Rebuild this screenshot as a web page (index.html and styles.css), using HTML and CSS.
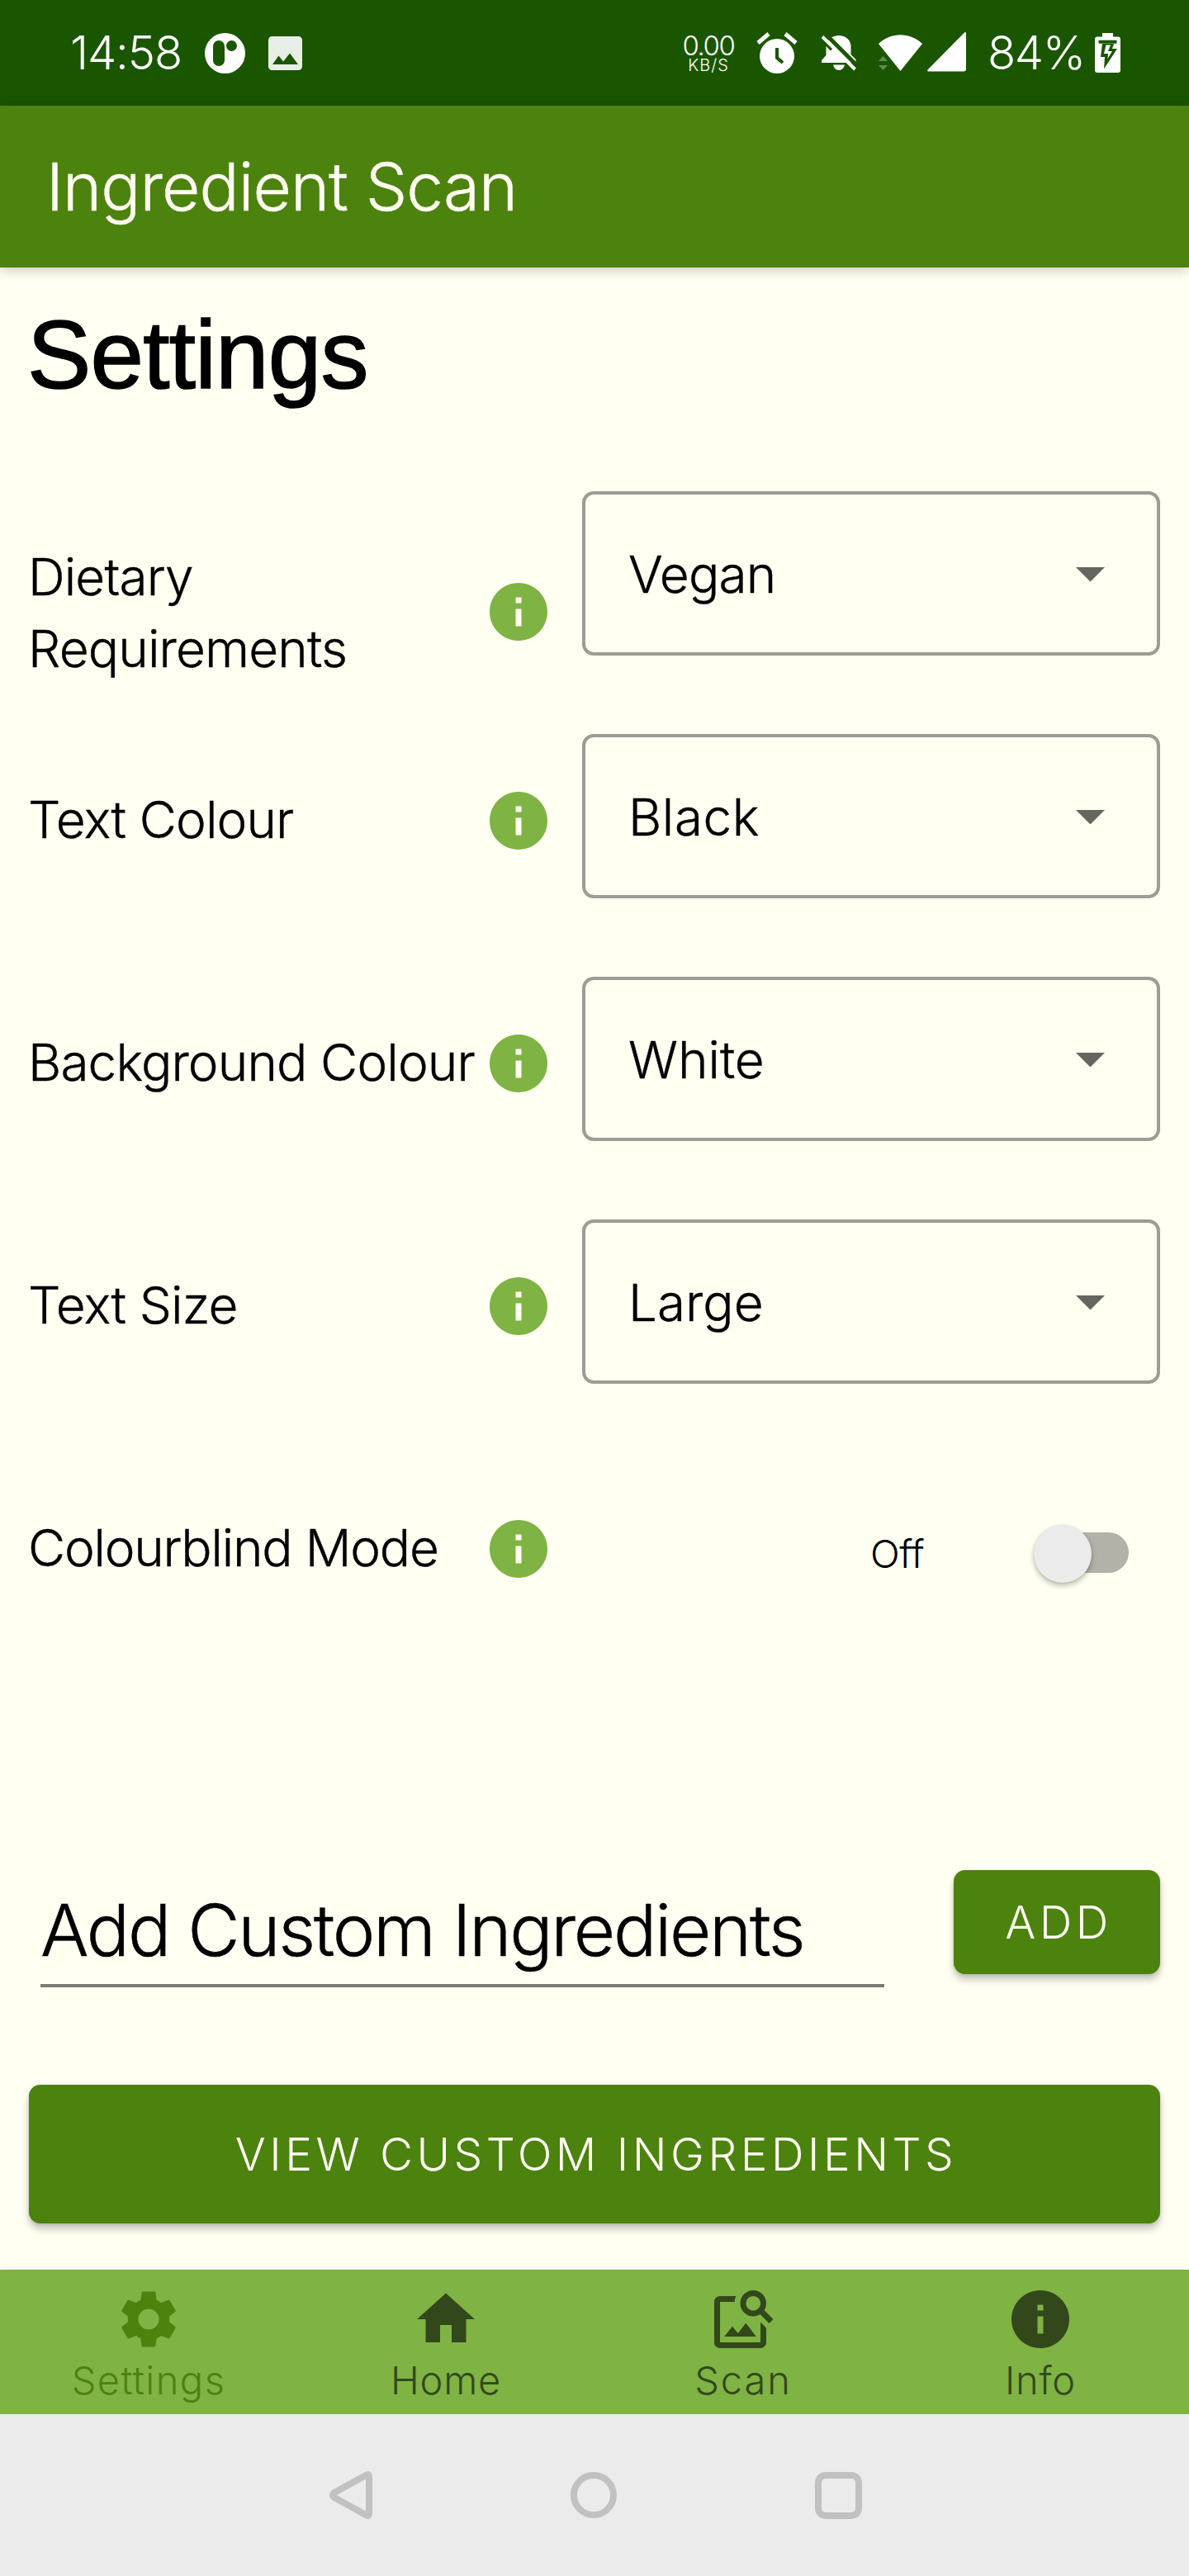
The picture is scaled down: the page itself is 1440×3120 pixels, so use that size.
FILE: index.html
```html
<!DOCTYPE html>
<html lang="en">
<head>
<meta charset="utf-8">
<title>Ingredient Scan</title>
<link rel="stylesheet" href="styles.css">
</head>
<body>
<svg class="defs" width="0" height="0" aria-hidden="true">
  <symbol id="info" viewBox="0 0 24 24"><path d="M12 2C6.48 2 2 6.48 2 12s4.48 10 10 10 10-4.48 10-10S17.52 2 12 2zm1 15h-2v-6h2v6zm0-8h-2V7h2v2z"/></symbol>
  <symbol id="caret" viewBox="0 0 10 5"><path d="M0 0l5 5 5-5z"/></symbol>
</svg>

<header class="status">
  <span class="status-time">14:58</span>
  <svg class="status-app" width="49" height="49" viewBox="0 0 49 49"><circle cx="24.5" cy="24.5" r="24.5" fill="#fff"/><rect x="10" y="9" width="14" height="31" rx="7" fill="#1a5600"/><circle cx="32.5" cy="15.5" r="6.5" fill="#1a5600"/></svg>
  <svg class="status-photo" width="41" height="41" viewBox="0 0 41 41"><path fill="#e8eee6" fill-rule="evenodd" d="M4.500 0h32a4.500 4.500 0 0 1 4.500 4.500v32a4.500 4.500 0 0 1-4.500 4.500h-32a4.500 4.500 0 0 1-4.500-4.500v-32a4.500 4.500 0 0 1 4.500-4.500zM5 34h31L26 20.500l-8 10-5.500-7z"/></svg>
  <div class="status-right">
    <div class="net"><span class="net-rate">0.00</span><span class="net-unit">KB/S</span></div>
    <svg class="alarm" width="50" height="50" viewBox="0 0 50 50"><circle cx="25" cy="29" r="21" fill="#fff"/><path d="M2 13L15 2M48 13L35 2" stroke="#fff" stroke-width="5"/><path d="M25 19v12l7 6" fill="none" stroke="#1a5600" stroke-width="4"/></svg>
    <svg class="bell" width="42" height="43" viewBox="0 0 42 43"><path fill="#fff" d="M21 0c8 0 14 5 14.500 12v11l6 6v4H0v-3l5.500-6V13C6 5 13 0 21 0zM14 35.500h14c-1 4-3.500 6.500-7 6.500s-6-2.500-7-6.500z"/><path d="M4.500-2L45 38.500" stroke="#1a5600" stroke-width="5"/><path d="M-1-1.500v8l12 12 3-3z" fill="#1a5600"/><path d="M1 1.500L40.500 41" stroke="#fff" stroke-width="4"/></svg>
    <svg class="wifi" width="53" height="44" viewBox="0 0 53 44"><path fill="#fff" d="M0 11C15-3.500 38-3.500 53 11L26.500 44z"/><path fill="#5f8b4d" d="M5.500 26L11 32H0zM0 37h11l-5.500 6z"/></svg>
    <svg class="signal" width="47" height="48" viewBox="0 0 47 48"><path fill="#fff" d="M44 1.500Q47-1.500 47 2V44.500Q47 47.500 44 47.500H1.500Q-1 47.500 1 45z"/></svg>
    <span class="percent">84%</span>
    <svg width="31" height="48" viewBox="0 0 31 48"><path fill="#fff" d="M9 0h13v4.500h6a3 3 0 0 1 3 3V45a3 3 0 0 1-3 3H3a3 3 0 0 1-3-3V7.500a3 3 0 0 1 3-3h6z"/><path d="M4.500 10.700h22" stroke="#1a5600" stroke-width="4"/><path fill="#1a5600" d="M9 13h14l-2 6h6L11 43.500l1-14.500H7z"/><path fill="#fff" d="M13.500 14.500h5.500l-3 7.500h5l-5.500 9 .5-6h-5z"/></svg>
  </div>
</header>

<div class="appbar">Ingredient Scan</div>

<main class="content">
  <h1 class="title">Settings</h1>

  <section class="row">
    <div class="label-group"><span class="label">Dietary Requirements</span><svg class="info raised"><use href="#info"/></svg></div>
    <div class="select"><span class="tight">Vegan</span><svg class="caret"><use href="#caret"/></svg></div>
  </section>
  <section class="row">
    <div class="label-group"><span class="label">Text Colour</span><svg class="info"><use href="#info"/></svg></div>
    <div class="select"><span class="loose">Black</span><svg class="caret"><use href="#caret"/></svg></div>
  </section>
  <section class="row">
    <div class="label-group"><span class="label">Background Colour</span><svg class="info"><use href="#info"/></svg></div>
    <div class="select"><span>White</span><svg class="caret"><use href="#caret"/></svg></div>
  </section>
  <section class="row">
    <div class="label-group"><span class="label">Text Size</span><svg class="info"><use href="#info"/></svg></div>
    <div class="select"><span>Large</span><svg class="caret"><use href="#caret"/></svg></div>
  </section>
  <section class="row">
    <div class="label-group"><span class="label mode">Colourblind Mode</span><svg class="info"><use href="#info"/></svg></div>
    <div class="toggle"><span class="toggle-text">Off</span><div class="switch"><div class="track"></div><div class="thumb"></div></div></div>
  </section>

  <section class="add-row">
    <div class="field">Add Custom Ingredients</div>
    <div class="button add">ADD</div>
  </section>
  <div class="button view">VIEW CUSTOM INGREDIENTS</div>
</main>

<nav class="tabs">
  <div class="tab active"><svg class="tab-icon" viewBox="0 0 24 24"><path d="M19.140 12.940c.04-.3.060-.61.060-.94 0-.32-.02-.64-.07-.94l2.030-1.580c.18-.14.230-.41.120-.61l-1.920-3.320c-.12-.22-.37-.29-.59-.22l-2.390.960c-.5-.38-1.030-.7-1.620-.94l-.36-2.540c-.04-.24-.24-.41-.48-.41h-3.840c-.24 0-.43.170-.47.410l-.36 2.540c-.59.240-1.130.570-1.620.940l-2.390-.96c-.22-.08-.47 0-.59.220L2.740 8.870c-.12.210-.08.470.120.610l2.030 1.580c-.05.300-.09.630-.09.940s.020.640.070.940l-2.030 1.580c-.18.140-.23.410-.12.610l1.920 3.320c.12.220.370.290.590.220l2.390-.96c.5.380 1.030.700 1.620.940l.36 2.540c.05.240.240.410.480.410h3.840c.24 0 .440-.17.470-.41l.36-2.540c.59-.24 1.130-.56 1.620-.94l2.390.960c.22.080.470 0 .590-.22l1.920-3.320c.12-.22.070-.47-.12-.61l-2.010-1.580zM12 15.600c-1.980 0-3.600-1.620-3.600-3.600s1.620-3.600 3.600-3.600 3.600 1.620 3.600 3.600-1.620 3.600-3.600 3.600z"/></svg><span class="settings">Settings</span></div>
  <div class="tab"><svg class="tab-icon" viewBox="0 0 24 24"><path d="M10 20v-6h4v6h5v-8h3L12 3 2 12h3v8z"/></svg><span>Home</span></div>
  <div class="tab"><svg class="tab-icon" viewBox="0 0 24 24"><path d="M18 13v7H4V6h5.020c.05-.71.220-1.380.480-2H4c-1.100 0-2 .9-2 2v14c0 1.100.900 2 2 2h14c1.100 0 2-.9 2-2v-5l-2-2zm-1.500 5h-11l2.750-3.530 1.960 2.360 2.750-3.540L16.500 18zm2.800-9.110c.44-.7.700-1.510.700-2.390C20 4.010 17.990 2 15.500 2S11 4.010 11 6.500s2.010 4.500 4.490 4.500c.88 0 1.700-.26 2.390-.7L21 13.420 22.420 12 19.300 8.890zM15.500 9C14.120 9 13 7.880 13 6.500S14.120 4 15.500 4 18 5.120 18 6.500 16.880 9 15.500 9z"/></svg><span class="scan">Scan</span></div>
  <div class="tab"><svg class="tab-icon"><use href="#info"/></svg><span>Info</span></div>
</nav>

<footer class="system">
  <svg width="52" height="58" viewBox="0 0 52 58"><path d="M45 4.500Q48 3 48 7V51Q48 55 45 53.500L6 32Q2 29 6 26z" fill="none" stroke="#c1c1c1" stroke-width="8" stroke-linejoin="round"/></svg>
  <svg width="56" height="56" viewBox="0 0 56 56"><circle cx="28" cy="28" r="24" fill="none" stroke="#c1c1c1" stroke-width="8"/></svg>
  <svg width="57" height="57" viewBox="0 0 57 57"><rect x="4" y="4" width="49" height="49" rx="9" fill="none" stroke="#c1c1c1" stroke-width="8"/></svg>
</footer>
</body>
</html>
```

FILE: styles.css
```css
* { box-sizing: border-box; }

body {
  margin: 0;
  width: 1440px;
  height: 3120px;
  display: flex;
  flex-direction: column;
  background: #fffff2;
  color: #000;
  font-family: Inter, "Liberation Sans", sans-serif;
  font-weight: 300;
}

svg { display: block; flex: none; }
.defs { position: absolute; }

/* Status bar */
.status {
  flex: none;
  height: 128px;
  display: flex;
  align-items: center;
  padding: 0 83px 0 85px;
  background: #1a5600;
  color: #fff;
}
.status-time { width: 163px; font-size: 56px; line-height: 130px; letter-spacing: -1.07px; }
.status-app { margin-right: 28px; }
.status-right { margin-left: auto; display: flex; align-items: center; }
.net {
  width: 66px;
  margin: 0 25px 0 0;
  display: flex;
  flex-direction: column;
  align-items: center;
  white-space: nowrap;
}
.net-rate { font-size: 33px; line-height: 30px; letter-spacing: -1.47px; }
.net-unit { font-size: 20px; line-height: 18px; letter-spacing: 1px; }
.alarm { margin-right: 29px; }
.bell { margin-right: 27px; }
.wifi { margin-right: 6px; }
.signal { margin: 0 26px 2px 0; }
.percent { width: 130px; font-size: 56px; line-height: 130px; letter-spacing: -1.4px; }

/* App bar */
.appbar {
  flex: none;
  height: 196px;
  padding-left: 56px;
  background: #4c820e;
  color: #fffff2;
  font-size: 80px;
  line-height: 196px;
  letter-spacing: -0.91px;
  -webkit-text-stroke: 0.5px #fffff2;
  box-shadow: 0 3px 14px rgba(0, 0, 0, 0.22);
}

/* Settings */
.content { flex: 1; padding: 0 35px; }
.title {
  margin: 0 0 12px -2px;
  font: 400 116px/212px "Liberation Sans", sans-serif;
  letter-spacing: -0.8px;
  -webkit-text-stroke: 1.6px #000;
}
.row { height: 294px; display: flex; align-items: flex-start; }
.label-group {
  width: 635px;
  margin: 107px 35px 0 0;
  display: flex;
  align-items: center;
}
.label {
  width: 551px;
  margin-left: -1px;
  margin-right: 1px;
  padding-bottom: 2px;
  font-size: 62px;
  line-height: 87px;
  letter-spacing: -0.85px;
  -webkit-text-stroke: 0.4px #000;
}
.mode { letter-spacing: -1.2px; }
.info { width: 84px; height: 84px; fill: #7fb344; }
.raised { margin-bottom: 4px; }
.select {
  width: 700px;
  height: 199px;
  margin-top: 47px;
  padding: 53px 63px 0 52px;
  display: flex;
  justify-content: space-between;
  align-items: flex-start;
  border: 4px solid #9d9d94;
  border-radius: 14px;
  font-size: 62px;
  line-height: 87px;
  -webkit-text-stroke: 0.4px #000;
}
.tight { letter-spacing: -0.8px; }
.loose { letter-spacing: 0.6px; }
.caret { width: 35px; height: 17.5px; margin-top: 35px; fill: #666660; }

.toggle {
  width: 700px;
  margin-top: 123px;
  padding-right: 38px;
  display: flex;
  justify-content: flex-end;
}
.toggle-text { width: 70px; margin: 5px 128px 0 0; font-size: 47px; line-height: 60px; letter-spacing: -0.5px; }
.switch { width: 115px; height: 70px; display: grid; align-items: center; }
.track, .thumb { grid-area: 1 / 1; }
.track { height: 49px; margin: 0 0 3px 10px; border-radius: 25px; background: #b2b2a9; }
.thumb {
  width: 70px;
  height: 70px;
  border-radius: 50%;
  background: #ebebeb;
  box-shadow: 0 4px 6px rgba(0, 0, 0, 0.25), 0 0 3px rgba(0, 0, 0, 0.12);
}

/* Custom ingredients */
.add-row { margin-top: 247px; display: flex; align-items: flex-start; justify-content: space-between; }
.field {
  width: 1022px;
  height: 142px;
  margin-left: 14px;
  padding-top: 7px;
  border-bottom: 4px solid #7c7c75;
  font-size: 87px;
  line-height: 131px;
  letter-spacing: -2.3px;
  white-space: nowrap;
  -webkit-text-stroke: 0.5px #000;
}
.button {
  border-radius: 14px;
  background: #4c820e;
  color: #fffff2;
  font-size: 55px;
  letter-spacing: 4.5px;
  text-align: center;
  padding-left: 4px;
  box-shadow: 0 7px 10px rgba(0, 0, 0, 0.22), 0 1px 4px rgba(0, 0, 0, 0.12);
}
.add { width: 250px; height: 126px; line-height: 126px; }
.view { height: 168px; margin-top: 118px; line-height: 168px; }

/* Bottom navigation */
.tabs {
  flex: none;
  height: 175px;
  display: flex;
  background: #7fb344;
  color: #32481b;
  fill: #32481b;
  box-shadow: 0 0 8px rgba(0, 0, 0, 0.08);
}
.tab {
  flex: 1;
  display: flex;
  flex-direction: column;
  align-items: center;
  gap: 2px;
  padding-top: 18px;
  font-size: 47px;
  line-height: 60px;
  letter-spacing: 0.75px;
}
.active { color: #4c820e; fill: #4c820e; }
.settings { letter-spacing: 1.45px; }
.scan { letter-spacing: 1.9px; }
.tab-icon { width: 84px; height: 84px; }

/* System navigation */
.system {
  flex: none;
  height: 196px;
  display: flex;
  align-items: center;
  justify-content: space-between;
  padding: 0 396px 0 399px;
  background: #ebebeb;
}
```
